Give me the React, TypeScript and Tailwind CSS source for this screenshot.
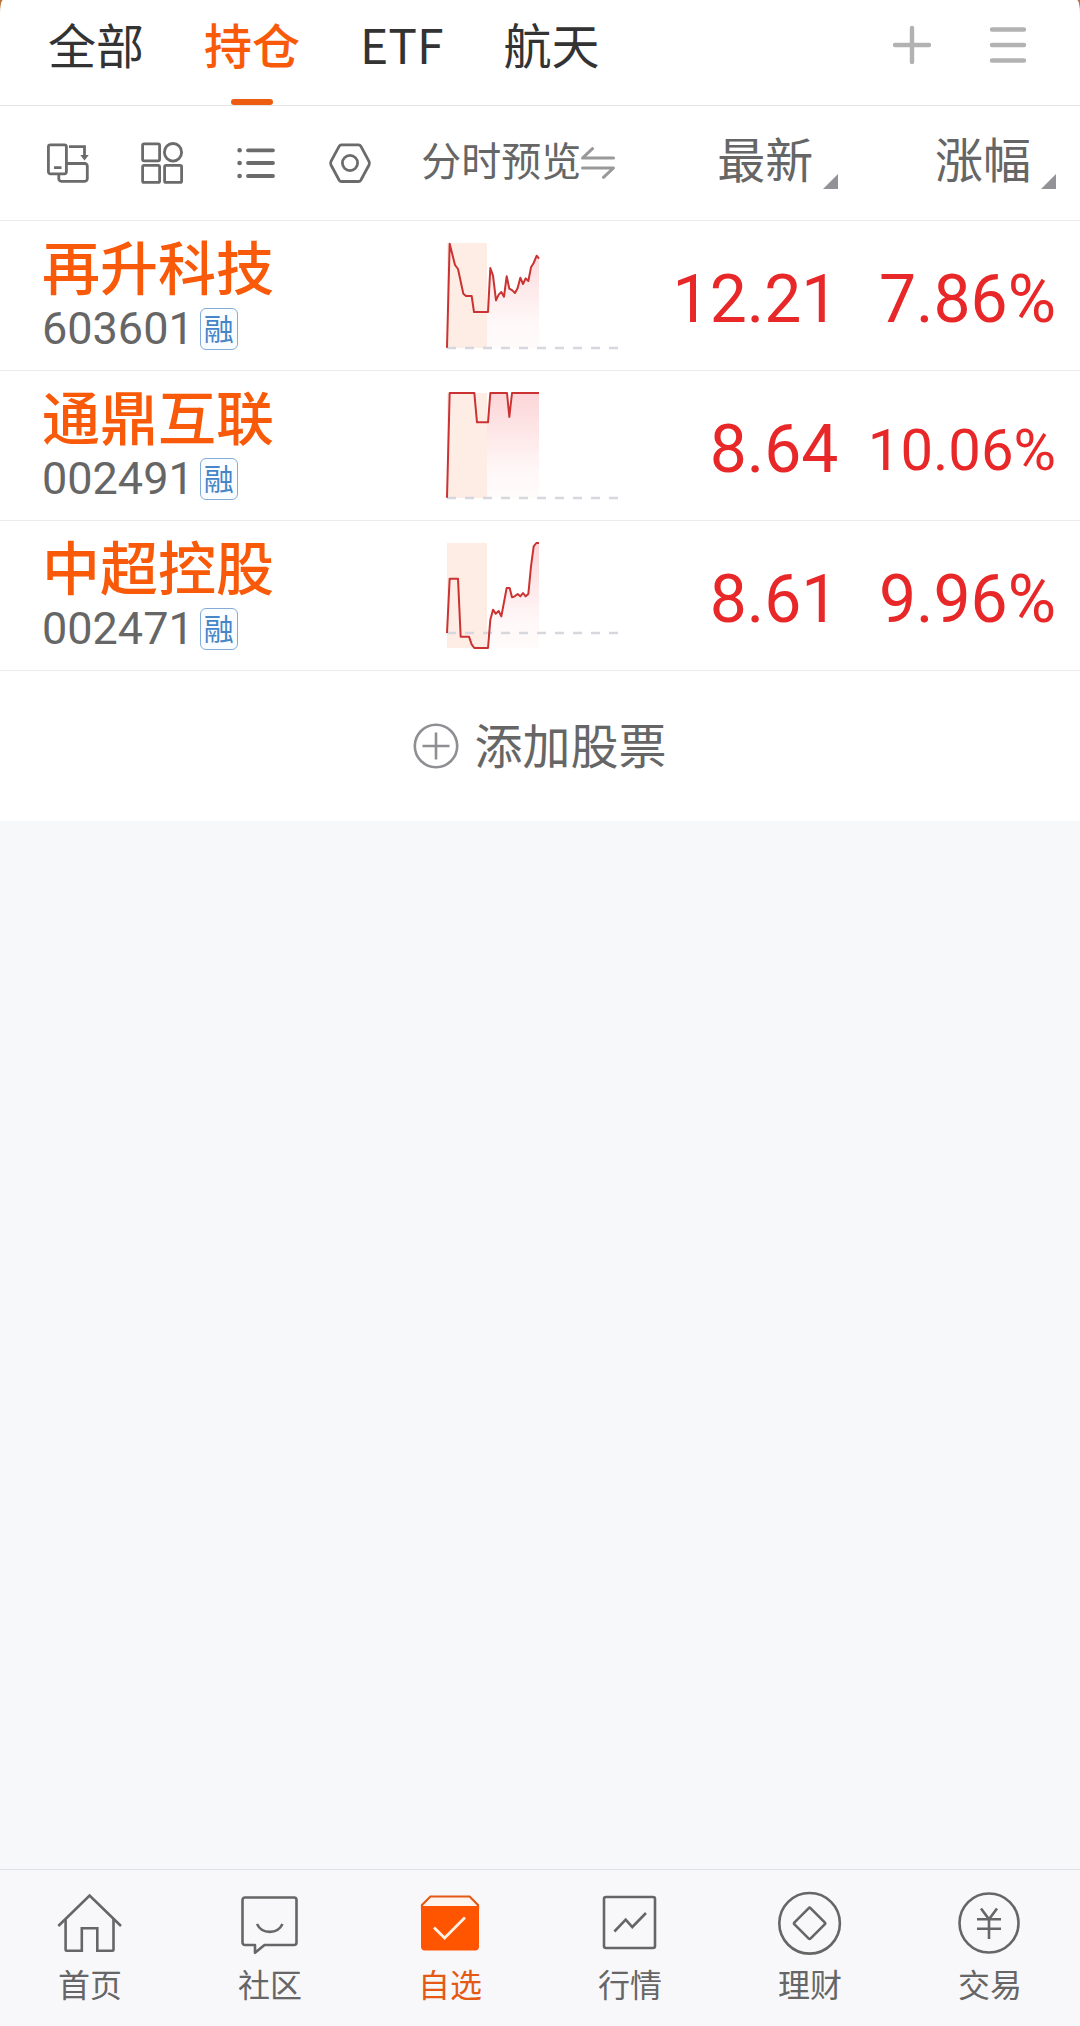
import type { ReactNode } from "react"
import clsx from "clsx"

const tabs = ["全部", "持仓", "ETF", "航天"]
const activeTab = "持仓"

type Stock = {
  name: string
  code: string
  price: string
  change: string
  baseline: number
  points: string
}

// Sparkline points live in a 516 x 315 box, the session so far ends at x = 276
const stocks: Stock[] = [
  {
    name: "再升科技",
    code: "603601",
    price: "12.21",
    change: "7.86%",
    baseline: 315,
    points:
      "0,314 8,2 24,66 33,78 49,152 57,159 74,159 81,207 123,207 130,75 138,98 147,172 155,155 163,147 171,161 179,100 187,137 196,142 204,150 212,135 220,104 228,123 236,106 244,114 252,73 260,60 269,38 276,47",
  },
  {
    name: "通鼎互联",
    code: "002491",
    price: "8.64",
    change: "10.06%",
    baseline: 315,
    points:
      "0,314 8,0 82,0 90,88 123,88 130,0 180,0 187,72 195,0 276,0",
  },
  {
    name: "中超控股",
    code: "002471",
    price: "8.61",
    change: "9.96%",
    baseline: 270,
    points:
      "0,270 8,107 33,107 41,281 66,281 74,304 82,315 123,315 130,230 138,200 146,212 155,204 163,220 179,135 188,135 195,163 203,160 212,153 220,160 228,150 236,160 244,153 252,70 260,10 268,0 276,0",
  },
]

function Sparkline({ code, points, baseline }: { code: string; points: string; baseline: number }) {
  const fillId = `fill-${code}`
  return (
    <svg viewBox="0 0 516 315" className="block h-[105px] w-[172px] overflow-visible" aria-hidden="true">
      <defs>
        <linearGradient id={fillId} gradientUnits="userSpaceOnUse" x1="0" y1="0" x2="0" y2="315">
          <stop offset="0" stopColor="#fcd5d7" />
          <stop offset="0.75" stopColor="#fff8f8" />
          <stop offset="1" stopColor="#fffbfb" />
        </linearGradient>
      </defs>
      <polygon points={`${points} 276,315 0,315`} fill={`url(#${fillId})`} />
      <rect x="0" y="0" width="120" height="315" fill="#feede5" />
      <line x1="0" y1={baseline} x2="516" y2={baseline} stroke="#d6d8de" strokeWidth="7" strokeDasharray="27 27" />
      <polyline points={points} fill="none" stroke="#cb3232" strokeWidth="6" strokeLinejoin="round" />
    </svg>
  )
}

function ToolIcon({ children }: { children: ReactNode }) {
  return (
    <svg viewBox="0 0 44 44" className="size-11" fill="none" stroke="#6b6b6b" strokeWidth="2.8" aria-hidden="true">
      {children}
    </svg>
  )
}

const tools = [
  {
    label: "横屏",
    icon: (
      <ToolIcon>
        <rect x="2.4" y="3.8" width="18" height="29" rx="2" />
        <path d="M8 26.7h7.5M23 5.7h15.5v10M20.4 22.5h18.4a2.5 2.5 0 0 1 2.5 2.5v12.8a2.5 2.5 0 0 1-2.5 2.5H15.3a2.5 2.5 0 0 1-2.5-2.5v-5" />
        <path d="M34.3 14h8.4l-4.2 5.4z" fill="#6b6b6b" stroke="none" />
      </ToolIcon>
    ),
  },
  {
    label: "宫格",
    icon: (
      <ToolIcon>
        <rect x="2.6" y="2.8" width="17" height="17" rx="1.5" />
        <ellipse cx="33" cy="11.3" rx="8.6" ry="8.8" />
        <rect x="2.6" y="24.4" width="17" height="17" rx="1.5" />
        <rect x="24.6" y="24.4" width="17" height="17" rx="1.5" />
      </ToolIcon>
    ),
  },
  {
    label: "列表",
    icon: (
      <ToolIcon>
        <path d="M14 9.3h25M14 22h25M14 35h25" strokeWidth="3.8" strokeLinecap="round" />
        <path d="M5.6 9.3h.01M5.6 22h.01M5.6 35h.01" strokeWidth="4.6" strokeLinecap="round" />
      </ToolIcon>
    ),
  },
  {
    label: "设置",
    icon: (
      <ToolIcon>
        <path d="M13.4 3.9h17.2q1.4 0 2.2 1.3l8.2 15.2q.9 1.8 0 3.6l-8.2 15.2q-.8 1.3-2.2 1.3H13.4q-1.4 0-2.2-1.3L3 24q-.9-1.8 0-3.6L11.2 5.2q.8-1.3 2.2-1.3z" />
        <circle cx="22" cy="22" r="7.6" />
      </ToolIcon>
    ),
  },
]

function SortButton({ label, className }: { label: string; className?: string }) {
  return (
    <button type="button" className={clsx("ml-auto flex items-end gap-2.5 pb-1 text-5xl leading-none", className)}>
      <span className="pb-2">{label}</span>
      <svg viewBox="0 0 15 15" className="size-[15px]" aria-hidden="true">
        <path d="M15 0v15H0z" fill="#929297" />
      </svg>
    </button>
  )
}

function NavIcon({ children }: { children: ReactNode }) {
  return (
    <svg viewBox="0 0 64 64" className="size-16 overflow-visible" fill="none" stroke="currentColor" strokeWidth="2.6" aria-hidden="true">
      {children}
    </svg>
  )
}

const navItems = [
  {
    label: "首页",
    icon: (
      <NavIcon>
        <path d="M.3 35 31.6 4.5 63 35" />
        <path d="M7.6 28v30.500q0 1.200 1.200 1.200h15V37.300h15.500v22.400h15q1.200 0 1.200-1.200V28" />
      </NavIcon>
    ),
  },
  {
    label: "社区",
    icon: (
      <NavIcon>
        <path
          d="M7 6.500h49a2.500 2.500 0 0 1 2.500 2.500v42.500a2.500 2.500 0 0 1-2.500 2.500H26.500L17 61.800V54H7a2.500 2.500 0 0 1-2.500-2.500V9A2.500 2.500 0 0 1 7 6.500z"
          strokeLinejoin="round"
        />
        <path d="M19 33c5 10.500 20.500 10.500 25.500 0" />
      </NavIcon>
    ),
  },
  {
    label: "自选",
    active: true,
    icon: (
      <NavIcon>
        <path d="M4 14 12.400 5.500h39.200L60 14v4H4z" fill="#fff4ee" strokeWidth="2.2" />
        <path d="M3 15h58v40.500a4 4 0 0 1-4 4H7a4 4 0 0 1-4-4z" fill="#ff5500" stroke="none" />
        <path d="m16 36.500 10.600 10.600L47 26.500" stroke="#fff0e4" strokeWidth="2.8" />
      </NavIcon>
    ),
  },
  {
    label: "行情",
    icon: (
      <NavIcon>
        <rect x="6" y="6" width="51" height="51" rx="2" />
        <path d="m16.400 40.500 11.300-11.800 6.600 7.300L48 22" />
      </NavIcon>
    ),
  },
  {
    label: "理财",
    icon: (
      <NavIcon>
        <circle cx="31.6" cy="32.3" r="30.3" />
        <path d="M30.500 17.300q1.100-1.100 2.200 0l14 14q1 1 0 2l-14 14q-1.100 1.100-2.200 0l-14-14q-1-1 0-2z" />
      </NavIcon>
    ),
  },
  {
    label: "交易",
    icon: (
      <NavIcon>
        <circle cx="31" cy="32" r="29.5" />
        <path d="m23 17.500 8 10.800 8-10.800M19 28.300h24M19 37.700h24M31 28.300V48" />
      </NavIcon>
    ),
  },
]

export default function App() {
  return (
    <div className="flex min-h-screen flex-col bg-[#b8733a] font-['Noto_Sans_CJK_SC',sans-serif] text-[#666666]">
      <header className="flex h-[106px] items-stretch justify-between rounded-tl-[3px_14px] rounded-tr-[3px_14px] border-b border-[#e4e4e4] bg-white px-12">
        <nav className="flex gap-[60px]">
          {tabs.map((tab) => (
            <button
              key={tab}
              type="button"
              className={clsx(
                "relative flex items-center pb-5 text-5xl leading-none",
                tab === activeTab ? "font-medium text-[#f95a0a]" : "text-[#333333]"
              )}
            >
              {tab}
              {tab === activeTab && (
                <span className="absolute bottom-0 left-1/2 h-1.5 w-[42px] -translate-x-1/2 rounded-full bg-[#ee5c12]" />
              )}
            </button>
          ))}
        </nav>
        <div className="flex items-center gap-12 pb-4">
          <button type="button" aria-label="添加">
            <svg viewBox="0 0 48 48" className="size-12" stroke="#b2b2b2" strokeWidth="4.4" strokeLinecap="round">
              <path d="M24 7v34M7 24h34" />
            </svg>
          </button>
          <button type="button" aria-label="菜单">
            <svg viewBox="0 0 48 48" className="size-12" stroke="#b2b2b2" strokeWidth="4.4" strokeLinecap="round">
              <path d="M8 8.500h32M8 24h32M8 39.500h32" />
            </svg>
          </button>
        </div>
      </header>

      <table className="w-full table-fixed border-separate border-spacing-0 bg-white">
        <thead>
          <tr className="[&>th]:h-[115px] [&>th]:border-b [&>th]:border-[#ebebeb] [&>th]:p-0 [&>th]:font-normal">
            <th className="w-[39%]">
              <div className="flex gap-[50px] pl-[46px]">
                {tools.map((tool) => (
                  <button key={tool.label} type="button" aria-label={tool.label}>
                    {tool.icon}
                  </button>
                ))}
              </div>
            </th>
            <th className="w-[19%]">
              <button type="button" className="flex items-center text-[40px] leading-none whitespace-nowrap">
                <span className="pb-2">分时预览</span>
                <svg viewBox="0 0 34 32" className="h-8 w-[34px] shrink-0" fill="none" stroke="#999999" strokeWidth="3" strokeLinecap="round" strokeLinejoin="round">
                  <path d="M32.500 11H1.500l10-9.300M1.500 21h31l-10 9.300" />
                </svg>
              </button>
            </th>
            <th className="w-[20%]">
              <SortButton label="最新" className="pr-1" />
            </th>
            <th className="w-[22%]">
              <SortButton label="涨幅" className="pr-6" />
            </th>
          </tr>
        </thead>
        <tbody>
          {stocks.map((stock) => (
            <tr key={stock.code} className="[&>td]:h-[150px] [&>td]:border-b [&>td]:border-[#ebebeb]">
              <td className="pt-2 pr-0 pb-0 pl-[42px]">
                <div className="text-[58px] leading-[58px] font-medium text-[#f95a0a]">{stock.name}</div>
                <div className="flex h-[70px] items-center gap-1.5">
                  <span className="font-['Roboto',sans-serif] text-[45px] leading-none">{stock.code}</span>
                  <span className="flex h-[42px] w-[38px] items-center justify-center rounded-md border border-[#85abd8] bg-[#fafdff] text-[30px] leading-none text-[#4585c8]">
                    <span className="pb-1">融</span>
                  </span>
                </div>
              </td>
              <td className="py-0 pr-0 pl-[26px]">
                <Sparkline code={stock.code} points={stock.points} baseline={stock.baseline} />
              </td>
              <td className="pt-2 pr-1 pb-0 pl-0 text-right font-['Roboto',sans-serif] text-[66px] leading-none text-[#e82828]">
                {stock.price}
              </td>
              <td
                className={clsx(
                  "pt-2 pr-6 pb-0 pl-0 text-right font-['Roboto',sans-serif] leading-none text-[#e82828]",
                  stock.change.length > 5 ? "text-[58px]" : "text-[66px]"
                )}
              >
                {stock.change}
              </td>
            </tr>
          ))}
        </tbody>
      </table>

      <button type="button" className="flex h-[150px] items-center justify-center gap-[15px] bg-white text-5xl leading-none">
        <svg viewBox="0 0 46 46" className="size-[46px]" fill="none" stroke="#8e8e93" strokeWidth="2.6" aria-hidden="true">
          <circle cx="23" cy="23" r="21.2" />
          <path d="M23 9.500v27M9.500 23h27" />
        </svg>
        <span className="pb-1.5">添加股票</span>
      </button>

      <main className="grow bg-[#f6f8fa]" />

      <nav className="grid h-[157px] grid-cols-6 border-t border-[#e0e1e4] bg-[#f8f8fb]">
        {navItems.map((item) => (
          <a
            key={item.label}
            href="#"
            className={clsx(
              "flex flex-col items-center gap-2.5 pt-[21px] text-[32px] leading-[36px]",
              item.active ? "text-[#e45a14]" : "text-[#666666]"
            )}
          >
            {item.icon}
            <span>{item.label}</span>
          </a>
        ))}
      </nav>
    </div>
  )
}
